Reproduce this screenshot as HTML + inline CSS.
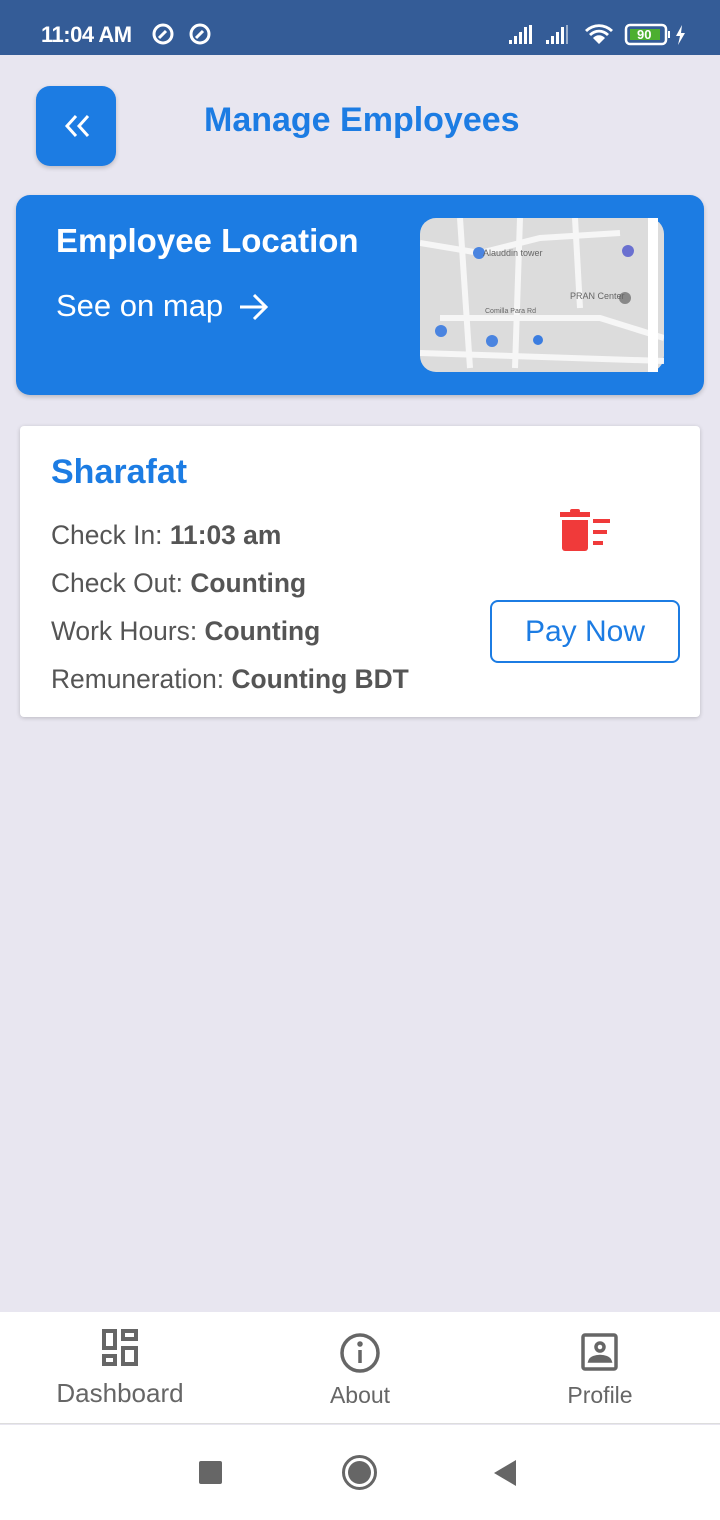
<!DOCTYPE html>
<html><head><meta charset="utf-8"><style>
*{margin:0;padding:0;box-sizing:border-box}
body{width:720px;height:1520px;background:#e8e6f0;font-family:"Liberation Sans",Roboto,sans-serif;position:relative;overflow:hidden}
.abs{position:absolute}
</style></head><body>
<div class="abs" style="left:0;top:0;width:720px;height:55px;background:#345c97"></div>
<div class="abs" style="left:41px;top:22px;color:#fff;font-size:22px;font-weight:bold;letter-spacing:-0.5px">11:04 AM</div>
<svg class="abs" style="left:150px;top:20px" width="70" height="28" viewBox="0 0 70 28" fill="none" stroke="#fff" stroke-width="3"><circle cx="13" cy="14" r="9"/><path d="M9 18l7-7"/><circle cx="50" cy="14" r="9"/><path d="M46 18l7-7"/></svg>
<svg class="abs" style="left:505px;top:22px" width="190" height="26" viewBox="0 0 190 26" fill="#fff">
<rect x="4" y="18" width="3" height="4"/><rect x="9" y="14" width="3" height="8"/><rect x="14" y="10" width="3" height="12"/><rect x="19" y="5" width="3" height="17"/><rect x="24" y="3" width="3" height="19"/>
<rect x="41" y="18" width="3" height="4"/><rect x="46" y="14" width="3" height="8"/><rect x="51" y="10" width="3" height="12"/><rect x="56" y="5" width="3" height="17"/><rect x="61" y="3" width="2" height="19" opacity=".5"/>
<path d="M80 8a20 20 0 0 1 28 0l-2 2a17 17 0 0 0-24 0zM84 12a14 14 0 0 1 20 0l-2 2a11 11 0 0 0-16 0zM88 16a8 8 0 0 1 12 0l-6 6z"/>
<rect x="121" y="3" width="40" height="19" rx="4" fill="none" stroke="#fff" stroke-width="2.5"/><rect x="125" y="7" width="30" height="11" fill="#4caf30"/><text x="132" y="17" font-size="13" font-family="Liberation Sans" fill="#fff" font-weight="bold">90</text><rect x="163" y="9" width="2" height="7"/>
<path d="M177 3l-6 11h4l-2 9 7-12h-4z"/></svg>

<div class="abs" style="left:36px;top:86px;width:80px;height:80px;border-radius:14px;background:#1c7ce3;box-shadow:0 2px 5px rgba(0,0,0,.2)"></div>
<svg class="abs" style="left:62px;top:112px" width="30" height="28" viewBox="0 0 30 28" fill="none" stroke="#fff" stroke-width="3"><path d="M14 4l-9 10 9 10M26 4l-9 10 9 10"/></svg>
<div class="abs" style="left:204px;top:101px;color:#1c7ce3;font-size:34px;font-weight:bold">Manage Employees</div>

<div class="abs" style="left:16px;top:195px;width:688px;height:200px;border-radius:14px;background:#1c7ce3;box-shadow:0 2px 5px rgba(0,0,0,.2)"></div>
<div class="abs" style="left:56px;top:222px;color:#fff;font-size:33px;font-weight:bold">Employee Location</div>
<div class="abs" style="left:56px;top:288px;color:#fff;font-size:31px">See on map</div>
<svg class="abs" style="left:238px;top:292px" width="32" height="30" viewBox="0 0 32 30" fill="none" stroke="#fff" stroke-width="3"><path d="M2 15h26M16 3l12 12-12 12"/></svg>
<svg class="abs" style="left:420px;top:218px" width="244" height="154" viewBox="0 0 244 154">
<rect width="244" height="154" rx="16" fill="#dcdcdc"/>
<g stroke="#f6f6f6" stroke-width="6" fill="none"><path d="M0 25l60 10 60-15 80-5"/><path d="M40 0l10 150M100 0l-5 150M155 0l5 90M80 100h100l64 20"/><path d="M0 135l244 8"/><path d="M20 100h60"/></g>
<path d="M233 0v154" stroke="#fff" stroke-width="10"/>
<circle cx="59" cy="35" r="6" fill="#4a84e0"/><circle cx="208" cy="33" r="6" fill="#6a70d0"/><circle cx="205" cy="80" r="6" fill="#888"/><circle cx="72" cy="123" r="6" fill="#4a84e0"/><circle cx="21" cy="113" r="6" fill="#4a84e0"/><circle cx="118" cy="122" r="5" fill="#3b7de0"/>
<text x="63" y="38" font-size="9" fill="#666" font-family="Liberation Sans">Alauddin tower</text><text x="150" y="81" font-size="9" fill="#666" font-family="Liberation Sans">PRAN Center</text><text x="65" y="95" font-size="7" fill="#666" font-family="Liberation Sans">Comilla Para Rd</text>
</svg>

<div class="abs" style="left:20px;top:426px;width:680px;height:291px;border-radius:4px;background:#fff;box-shadow:0 1px 4px rgba(0,0,0,.2)"></div>
<div class="abs" style="left:51px;top:453px;color:#1c7ce3;font-size:34px;font-weight:bold">Sharafat</div>
<div class="abs" style="left:51px;top:511px;color:#555;font-size:26.4px;line-height:48px">Check In: <b>11:03 am</b><br>Check Out: <b>Counting</b><br>Work Hours: <b>Counting</b><br>Remuneration: <b>Counting BDT</b></div>
<svg class="abs" style="left:558px;top:508px" width="54" height="44" viewBox="0 0 54 44" fill="#f03a3a"><rect x="2" y="4" width="30" height="5"/><rect x="12" y="1" width="10" height="4" rx="2"/><path d="M4 12h26v28a3 3 0 0 1-3 3H7a3 3 0 0 1-3-3z"/><rect x="35" y="11" width="17" height="4"/><rect x="35" y="22" width="14" height="4"/><rect x="35" y="33" width="10" height="4"/></svg>
<div class="abs" style="left:490px;top:600px;width:190px;height:63px;border:2px solid #1c7ce3;border-radius:8px;color:#1c7ce3;font-size:30px;text-align:center;line-height:59px">Pay Now</div>

<div class="abs" style="left:0;top:1312px;width:720px;height:112px;background:#fff;border-bottom:1px solid #ddd"></div>
<svg class="abs" style="left:100px;top:1328px" width="40" height="40" viewBox="0 0 40 40" fill="none" stroke="#666" stroke-width="4"><rect x="4" y="3" width="11" height="17"/><rect x="23" y="3" width="13" height="8"/><rect x="4" y="28" width="11" height="8"/><rect x="23" y="20" width="13" height="16"/></svg>
<div class="abs" style="left:0;top:1378px;width:240px;text-align:center;color:#666;font-size:26px">Dashboard</div>
<svg class="abs" style="left:339px;top:1332px" width="42" height="42" viewBox="0 0 42 42" fill="none" stroke="#666" stroke-width="3.5"><circle cx="21" cy="21" r="18"/><path d="M21 18v13"/><circle cx="21" cy="12" r="1" fill="#666"/></svg>
<div class="abs" style="left:240px;top:1382px;width:240px;text-align:center;color:#666;font-size:23px">About</div>
<svg class="abs" style="left:580px;top:1332px" width="40" height="40" viewBox="0 0 40 40" fill="none" stroke="#666" stroke-width="3.5"><rect x="3" y="3" width="33" height="34" rx="2"/><circle cx="20" cy="15" r="4"/><path d="M10 29c2-6 18-6 20 0z" fill="#666"/></svg>
<div class="abs" style="left:480px;top:1382px;width:240px;text-align:center;color:#666;font-size:23px">Profile</div>

<div class="abs" style="left:0;top:1425px;width:720px;height:95px;background:#fff"></div>
<div class="abs" style="left:199px;top:1461px;width:23px;height:23px;background:#666;border-radius:2px"></div>
<div class="abs" style="left:342px;top:1455px;width:35px;height:35px;border:3px solid #666;border-radius:50%;padding:3px"><div style="width:100%;height:100%;background:#666;border-radius:50%"></div></div>
<svg class="abs" style="left:492px;top:1459px" width="26" height="28" viewBox="0 0 26 28" fill="#666"><path d="M24 1v26L2 14z"/></svg>
</body></html>
